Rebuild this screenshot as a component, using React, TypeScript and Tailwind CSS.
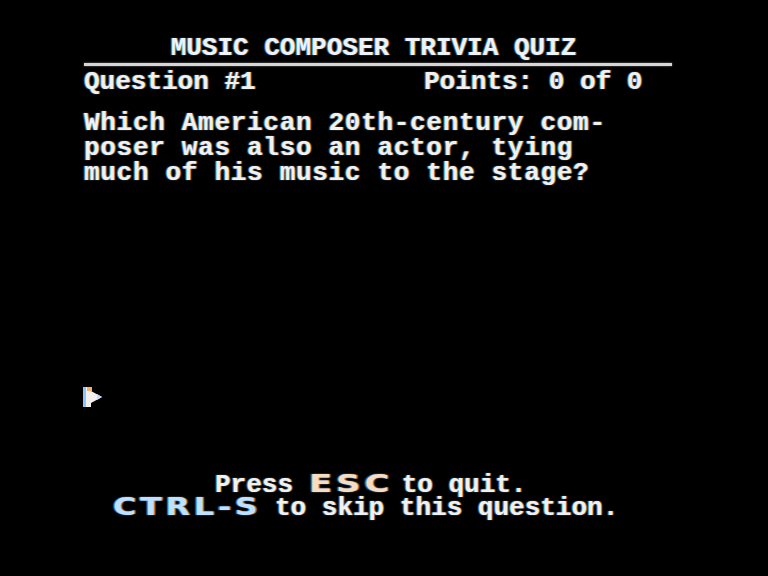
import React from 'react';

const mono = "font-['Liberation_Mono',_'DejaVu_Sans_Mono',_monospace] font-bold";
const glow = '[text-shadow:-1px_0_1px_#2f86ff,1px_0_1px_#e07a2a]';
const wide = "font-['DejaVu_Sans',_sans-serif] font-bold text-[25px] inline-block origin-left";

export default function App() {
  return (
    <div className="w-[768px] h-[576px] bg-black overflow-hidden text-[#f3f1ee]">
      <div className={`${mono} ${glow} pl-[84px] pt-[36px] w-[672px] text-[26px] leading-[25px]`}>
        {/* Title */}
        <div className="flex justify-center text-[#eef3fa] pr-[9px]">MUSIC COMPOSER TRIVIA QUIZ</div>
        <div className="mt-[2px] h-[3px] bg-[#d6d6d6] [box-shadow:0_0_2px_#888]" />

        {/* Status row */}
        <div className="mt-[4px] flex whitespace-pre">
          <span className="w-[340px]">Question #1</span>
          <span>Points: 0 of 0</span>
        </div>

        {/* Question */}
        <div className="mt-[16px] tracking-[0.7px]">
          <div>Which American 20th-century com-</div>
          <div>poser was also an actor, tying</div>
          <div>much of his music to the stage?</div>
        </div>

        {/* Pointer */}
        <div className="mt-[200px] h-[22px] -ml-[2px]">
          <svg width="22" height="22" viewBox="0 0 22 22">
            <polygon points="1,1 9,1 9,5 20,11 9,17 9,21 1,21" fill="#f2f0ec" />
            <rect x="1" y="1" width="3" height="20" fill="#8fc2ff" />
            <rect x="5" y="1" width="5" height="4" fill="#f0b070" />
            <polygon points="15,8 20,11 15,14" fill="#c0ddff" />
          </svg>
        </div>
      </div>

      {/* Footer */}
      <div className={`${mono} ${glow} mt-[65px] text-[26px] leading-[22px] flex flex-col`}>
        <div className="flex items-baseline whitespace-pre pl-[215px]">
          <span>Press </span>
          <span className="inline-block w-[93px]">
            <span className={`${wide} scale-x-[1.35] tracking-[3px] text-[#f6dcc2]`}>ESC</span>
          </span>
          <span>to quit.</span>
        </div>
        <div className="flex items-baseline whitespace-pre pl-[113px]">
          <span className="inline-block w-[162px]">
            <span className={`${wide} scale-x-[1.27] tracking-[3px] text-[#bfe0ff]`}>CTRL-S</span>
          </span>
          <span>to skip this question.</span>
        </div>
      </div>
    </div>
  );
}
